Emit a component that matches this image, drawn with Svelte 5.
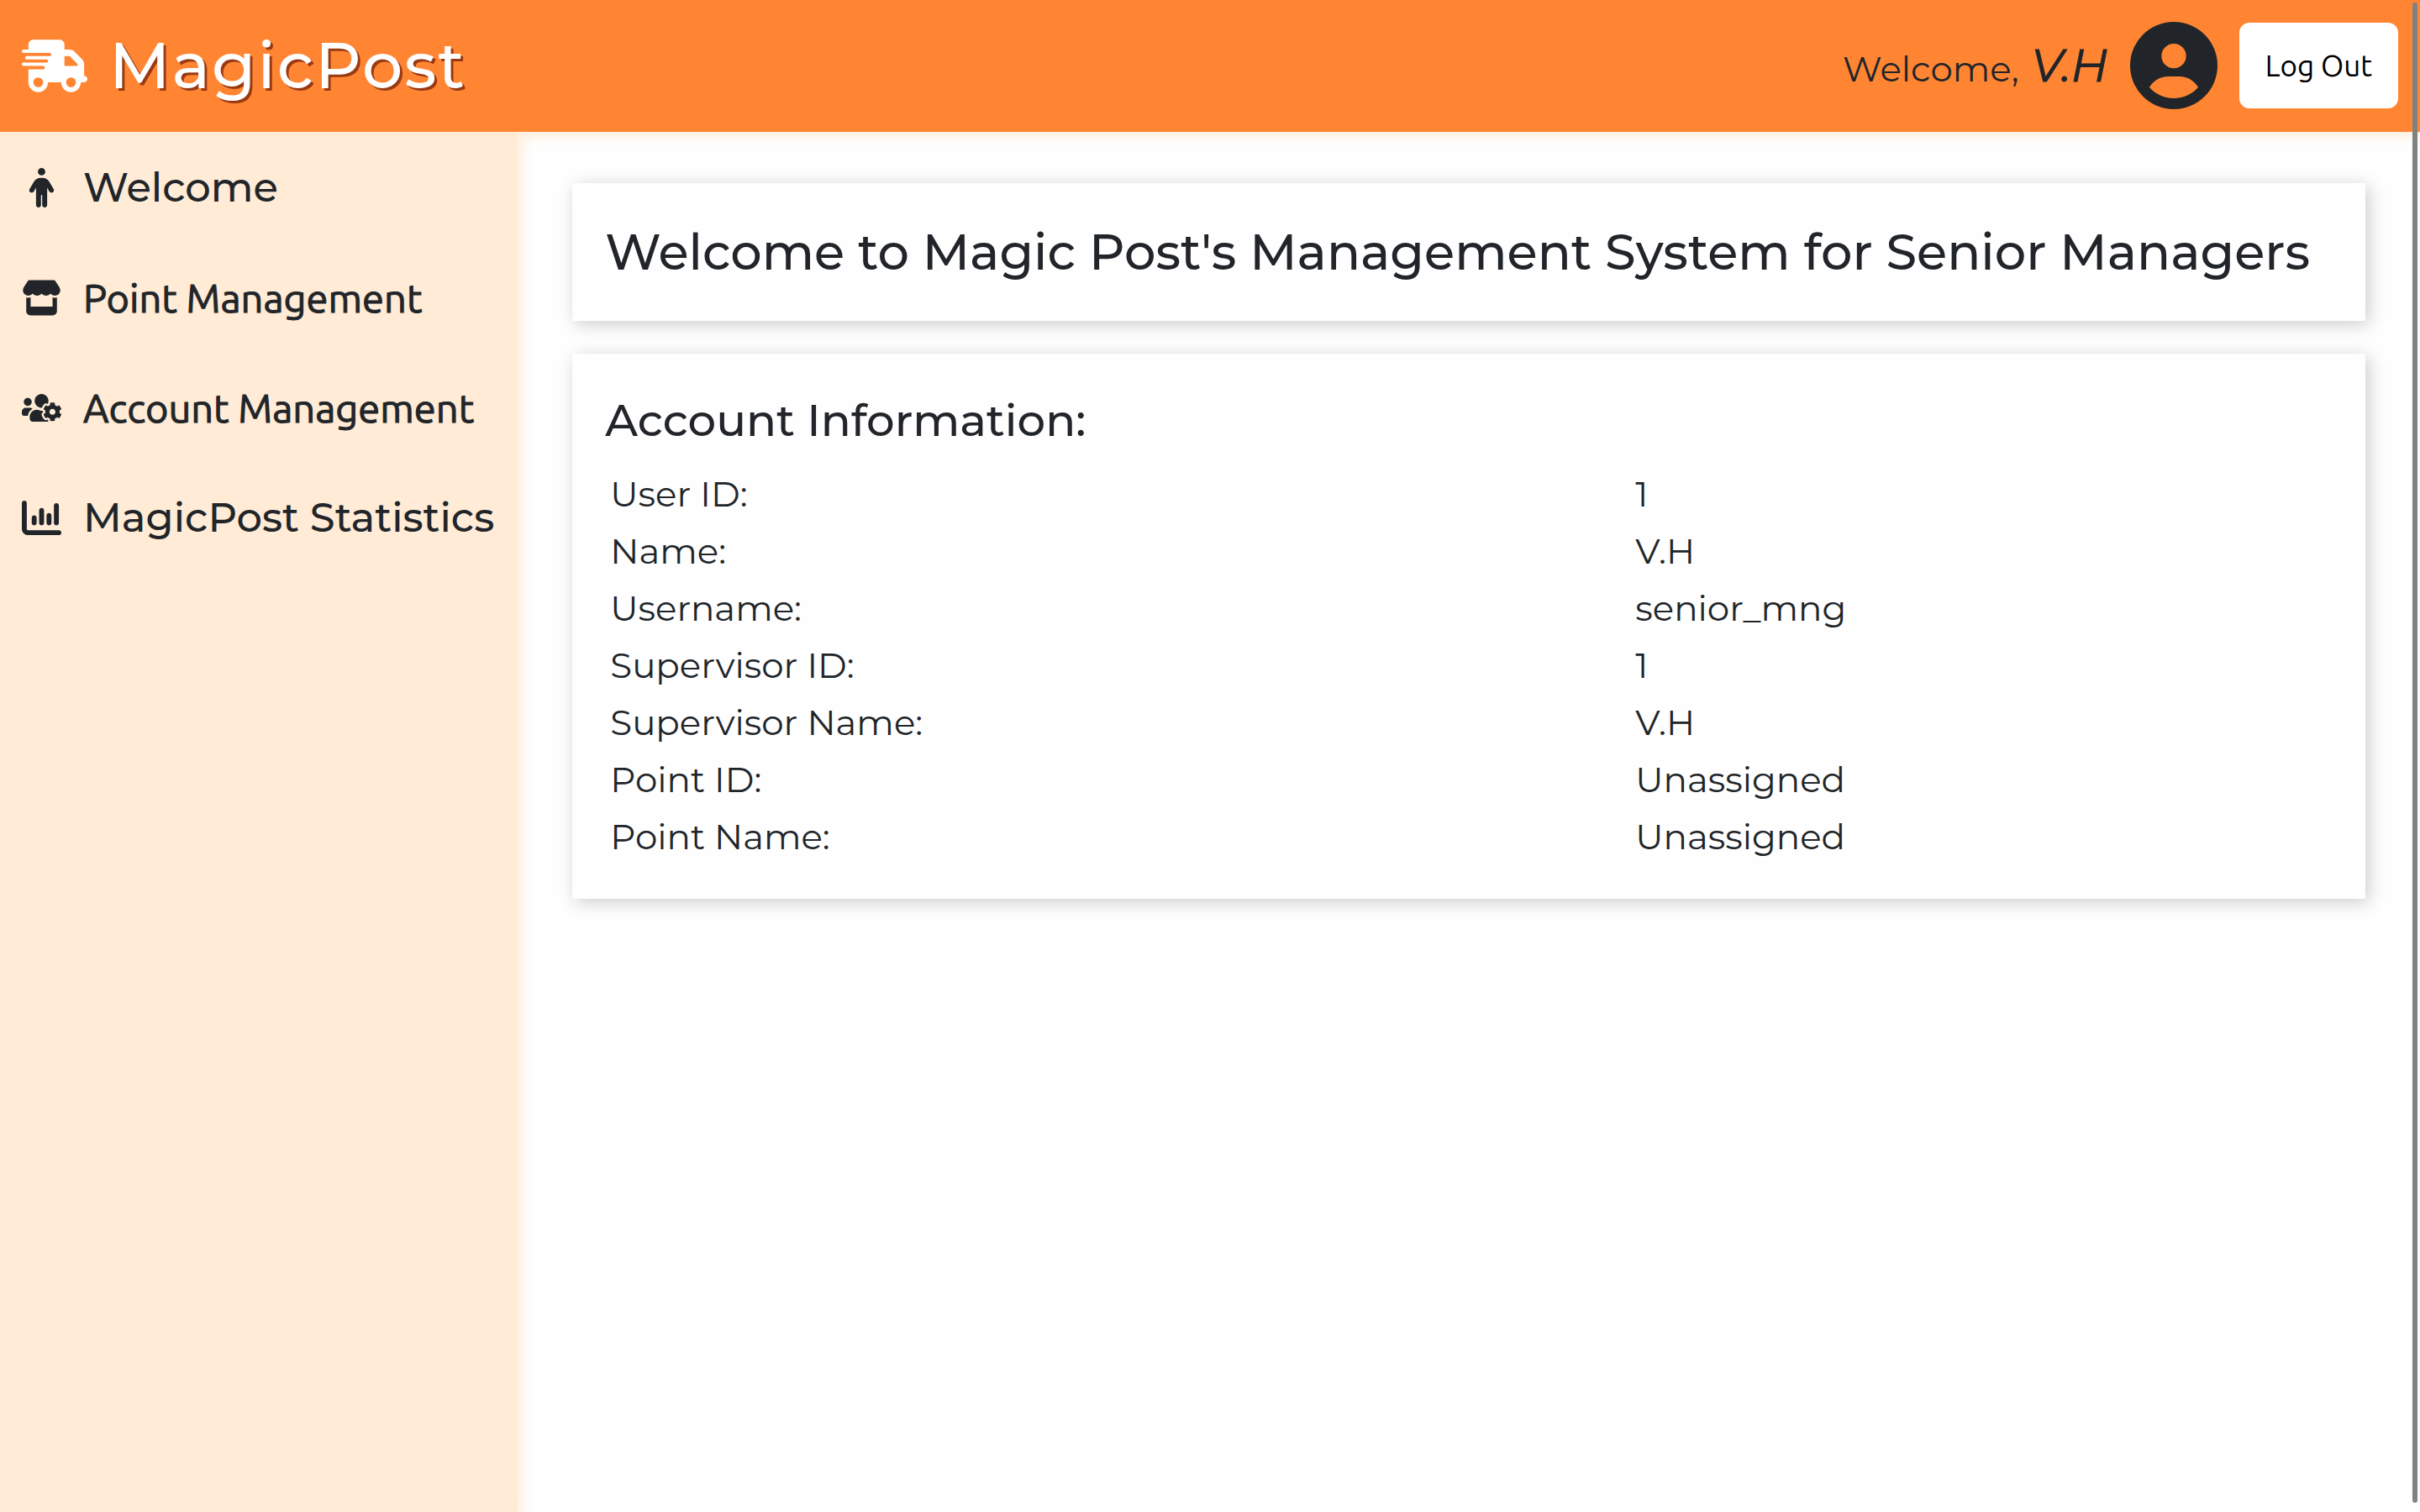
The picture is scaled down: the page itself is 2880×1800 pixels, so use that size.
<script>
  const nav = [
    {
      label: 'Welcome',
      viewBox: '0 0 320 512',
      path: 'M112 48a48 48 0 1 1 96 0 48 48 0 1 1 -96 0zm40 304V480c0 17.7-14.3 32-32 32s-32-14.3-32-32V256.9L59.4 304.5c-9.1 15.1-28.8 20-43.9 10.9s-20-28.8-10.9-43.9l58.3-97c17.4-28.9 48.6-46.6 82.3-46.6h29.7c33.7 0 64.9 17.7 82.3 46.6l58.3 97c9.1 15.1 4.2 34.8-10.9 43.9s-34.8 4.2-43.9-10.9L232 256.9V480c0 17.7-14.3 32-32 32s-32-14.3-32-32V352H152z'
    },
    {
      label: 'Point Management',
      alt: true,
      viewBox: '0 0 576 512',
      path: 'M547.6 103.8L490.3 13.1C485.2 5 476.1 0 466.4 0H109.6C99.9 0 90.8 5 85.7 13.1L28.3 103.8c-29.6 46.8-3.4 111.9 51.9 119.4c4 .5 8.1 .8 12.1 .8c26.1 0 49.3-11.4 65.2-29c15.9 17.6 39.1 29 65.2 29c26.1 0 49.3-11.4 65.2-29c15.9 17.6 39.1 29 65.2 29c26.2 0 49.3-11.4 65.2-29c16 17.6 39.1 29 65.2 29c4.1 0 8.1-.3 12.1-.8c55.5-7.4 81.8-72.5 52.1-119.4zM499.7 254.9l-.1 0c-5.3 .7-10.7 1.1-16.2 1.1c-12.4 0-24.3-1.9-35.4-5.3V384H128V250.6c-11.2 3.5-23.2 5.4-35.6 5.4c-5.5 0-11-.4-16.3-1.1l-.1 0c-4.1-.6-8.1-1.3-12-2.3V384v64c0 35.3 28.7 64 64 64H448c35.3 0 64-28.7 64-64V384 252.6c-4 1-8 1.8-12.3 2.3z'
    },
    {
      label: 'Account Management',
      alt: true,
      viewBox: '0 0 640 512',
      path: 'M610.5 341.3c2.6-14.1 2.6-28.5 0-42.6l25.8-14.9c3-1.7 4.3-5.2 3.3-8.5-6.7-21.6-18.2-41.2-33.2-57.4-2.3-2.5-6-3.1-9-1.4l-25.8 14.9c-10.9-9.3-23.4-16.5-36.9-21.3v-29.8c0-3.4-2.4-6.4-5.7-7.1-22.3-5-45-4.8-66.2 0-3.3.7-5.7 3.7-5.7 7.1v29.8c-13.5 4.8-26 12-36.9 21.3l-25.8-14.9c-2.9-1.7-6.7-1.1-9 1.4-15 16.2-26.5 35.8-33.2 57.4-1 3.3.4 6.8 3.3 8.5l25.8 14.9c-2.6 14.1-2.6 28.5 0 42.6l-25.8 14.9c-3 1.7-4.3 5.2-3.3 8.5 6.7 21.6 18.2 41.1 33.2 57.4 2.3 2.5 6 3.1 9 1.4l25.8-14.9c10.9 9.3 23.4 16.5 36.9 21.3v29.8c0 3.4 2.4 6.4 5.7 7.1 22.3 5 45 4.8 66.2 0 3.3-.7 5.7-3.7 5.7-7.1v-29.8c13.5-4.8 26-12 36.9-21.3l25.8 14.9c2.9 1.7 6.7 1.1 9-1.4 15-16.2 26.5-35.8 33.2-57.4 1-3.3-.4-6.8-3.3-8.5l-25.8-14.9zM496 368.5c-26.8 0-48.5-21.8-48.5-48.5s21.8-48.5 48.5-48.5 48.5 21.8 48.5 48.5-21.7 48.5-48.5 48.5zM96 224c35.3 0 64-28.7 64-64s-28.7-64-64-64-64 28.7-64 64 28.7 64 64 64zm224 32c1.9 0 3.7-.5 5.6-.6 8.3-21.7 20.5-42.1 36.3-59.2 7.4-8 17.9-12.6 28.9-12.6 6.9 0 13.7 1.8 19.6 5.3l7.9 4.6c.8-.5 1.6-.9 2.4-1.4 7-14.6 11.2-30.8 11.2-48 0-61.9-50.1-112-112-112S208 82.1 208 144c0 61.9 50.1 112 112 112zm105.2 194.5c-2.3-1.2-4.6-2.6-6.8-3.9-8.2 4.8-15.3 9.8-27.5 9.8-10.9 0-21.4-4.6-28.9-12.6-18.3-19.8-32.3-43.9-40.2-69.6-10.7-34.5 24.9-49.7 25.8-50.3-.1-2.6-.1-5.2 0-7.8l-7.9-4.6c-3.8-2.2-7-5-9.8-8.1-3.3.2-6.5.6-9.8.6-24.6 0-47.6-6-68.5-16h-8.3C179.6 288 128 339.6 128 403.2V432c0 26.5 21.5 48 48 48h255.4c-3.7-6-6.2-12.8-6.2-20.3v-9.2zM173.1 274.6C161.5 263.1 145.6 256 128 256H64c-35.3 0-64 28.7-64 64v32c0 17.7 14.3 32 32 32h65.9c6.3-47.4 34.9-87.3 75.2-109.4z'
    },
    {
      label: 'MagicPost Statistics',
      viewBox: '0 0 512 512',
      path: 'M32 32c17.7 0 32 14.3 32 32V400c0 8.8 7.2 16 16 16H480c17.7 0 32 14.3 32 32s-14.3 32-32 32H80c-44.2 0-80-35.8-80-80V64C0 46.3 14.3 32 32 32zM160 224c17.7 0 32 14.3 32 32v64c0 17.7-14.3 32-32 32s-32-14.3-32-32V256c0-17.7 14.3-32 32-32zm128-64V320c0 17.7-14.3 32-32 32s-32-14.3-32-32V160c0-17.7 14.3-32 32-32s32 14.3 32 32zm64 32c17.7 0 32 14.3 32 32v96c0 17.7-14.3 32-32 32s-32-14.3-32-32V224c0-17.7 14.3-32 32-32zM480 96V320c0 17.7-14.3 32-32 32s-32-14.3-32-32V96c0-17.7 14.3-32 32-32s32 14.3 32 32z'
    }
  ];

  const info = [
    ['User ID:', '1'],
    ['Name:', 'V.H'],
    ['Username:', 'senior_mng'],
    ['Supervisor ID:', '1'],
    ['Supervisor Name:', 'V.H'],
    ['Point ID:', 'Unassigned'],
    ['Point Name:', 'Unassigned']
  ];
</script>

<div class="app">
  <header class="topbar">
    <a class="brand" href="#home">
      <svg class="truck" viewBox="0 0 640 512" aria-hidden="true">
        <path d="M112 0C85.5 0 64 21.5 64 48V96H16c-8.8 0-16 7.2-16 16s7.2 16 16 16H64 272c8.8 0 16 7.2 16 16s-7.2 16-16 16H64 48c-8.8 0-16 7.2-16 16s7.2 16 16 16H64 240c8.8 0 16 7.2 16 16s-7.2 16-16 16H64 16c-8.8 0-16 7.2-16 16s7.2 16 16 16H64 208c8.8 0 16 7.2 16 16s-7.2 16-16 16H64V416c0 53 43 96 96 96s96-43 96-96H384c0 53 43 96 96 96s96-43 96-96h32c17.7 0 32-14.3 32-32s-14.3-32-32-32V288 256 237.3c0-17-6.7-33.3-18.7-45.3L512 114.7c-12-12-28.3-18.7-45.3-18.7H416V48c0-26.5-21.5-48-48-48H112zM544 237.3V256H416V160h50.7L544 237.3zM160 368a48 48 0 1 1 0 96 48 48 0 1 1 0-96zm272 48a48 48 0 1 1 96 0 48 48 0 1 1 -96 0z" />
      </svg>
      <span>MagicPost</span>
    </a>
    <div class="user">
      <p class="greeting">Welcome, <em>V.H</em></p>
      <svg class="avatar" viewBox="0 0 512 512" aria-hidden="true">
        <path d="M399 384.2C376.9 345.8 335.4 320 288 320H224c-47.4 0-88.9 25.8-111 64.2c35.2 39.2 86.2 63.8 143 63.8s107.8-24.7 143-63.8zM0 256a256 256 0 1 1 512 0A256 256 0 1 1 0 256zm256 16a72 72 0 1 0 0-144 72 72 0 1 0 0 144z" />
      </svg>
      <button class="logout" type="button">Log Out</button>
    </div>
  </header>

  <div class="body">
    <nav class="sidebar">
      {#each nav as item}
        <a class="item" class:alt={item.alt} href="#{item.label}">
          <svg viewBox={item.viewBox} aria-hidden="true"><path d={item.path} /></svg>
          <span>{item.label}</span>
        </a>
      {/each}
    </nav>
    <main class="content">
      <section class="card">
        <h1>Welcome to Magic Post's Management System for Senior Managers</h1>
      </section>
      <section class="card">
        <h2>Account Information:</h2>
        <table>
          <tbody>
            {#each info as [label, value]}
              <tr><th scope="row">{label}</th><td>{value}</td></tr>
            {/each}
          </tbody>
        </table>
      </section>
    </main>
  </div>
  <div class="scroll-thumb"></div>
</div>

<style>
  :global(body) {
    margin: 0;
  }
  .app,
  .app * {
    box-sizing: border-box;
  }
  .app {
    position: relative;
    display: flex;
    flex-direction: column;
    min-height: 100vh;
    background: #fefefe;
    color: #212529;
    font-family: 'Montserrat', 'Inter', sans-serif;
    font-size: 42px;
  }
  .topbar {
    position: relative;
    z-index: 1;
    display: flex;
    align-items: center;
    justify-content: space-between;
    padding: 26px 26px 27px;
    background: #ff8533;
    box-shadow: 0 0 16px 4px #ffebd6;
  }
  .brand {
    display: flex;
    align-items: center;
    gap: 26px;
    color: #fff;
    font-size: 76px;
    font-weight: 500;
    letter-spacing: 2px;
    line-height: 104px;
    text-decoration: none;
    text-shadow: 3px 3px 0 #993a12;
  }
  .truck {
    width: 78px;
    height: 63px;
    fill: currentColor;
  }
  .user {
    display: flex;
    align-items: center;
    gap: 26px;
  }
  .greeting {
    margin: 0;
    padding-top: 4px;
    line-height: 64px;
  }
  .greeting em {
    margin-left: 4px;
    font-size: 54px;
    -webkit-text-stroke: 1px currentColor;
  }
  .avatar {
    width: 104px;
    height: 104px;
    fill: currentColor;
  }
  .logout {
    padding: 0 31px;
    border: 0;
    border-radius: 12px;
    background: #fff;
    color: #000;
    font-family: 'Ubuntu', 'Open Sans', sans-serif;
    font-size: 35px;
    line-height: 102px;
  }
  .body {
    display: flex;
    flex: 1;
  }
  .sidebar {
    display: flex;
    flex-direction: column;
    gap: 66px;
    flex: none;
    padding: 34px 28px 34px 26px;
    background: #ffebd6;
    box-shadow: 0 0 16px 4px #ffebd6;
  }
  .item {
    display: flex;
    align-items: center;
    gap: 26px;
    color: inherit;
    font-size: 48px;
    font-weight: 500;
    line-height: 65px;
    text-decoration: none;
  }
  .item.alt {
    font-family: 'Ubuntu', 'Open Sans', sans-serif;
    font-size: 47px;
    font-weight: 400;
    -webkit-text-stroke: 1px currentColor;
  }
  .item svg {
    width: 47px;
    height: 47px;
    fill: currentColor;
  }
  .content {
    display: flex;
    flex: 1;
    flex-direction: column;
    gap: 39px;
    padding: 61px 65px;
  }
  .card {
    padding: 40px 39px;
    background: #fefefe;
    box-shadow: 4px 4px 20px rgba(0, 0, 0, 0.2);
  }
  h1,
  h2 {
    margin: 0;
    font-weight: 500;
  }
  h1 {
    font-size: 59px;
    line-height: 84px;
  }
  h2 {
    margin-bottom: 15px;
    font-size: 53px;
    line-height: 78px;
  }
  table {
    width: 100%;
    border-collapse: collapse;
  }
  th,
  td {
    padding: 0 6px;
    font-weight: 400;
    line-height: 68px;
    text-align: left;
  }
  .scroll-thumb {
    position: absolute;
    z-index: 2;
    top: 3px;
    right: 3px;
    bottom: 11px;
    width: 6px;
    border-radius: 3px;
    background: #7f8281;
  }
</style>
